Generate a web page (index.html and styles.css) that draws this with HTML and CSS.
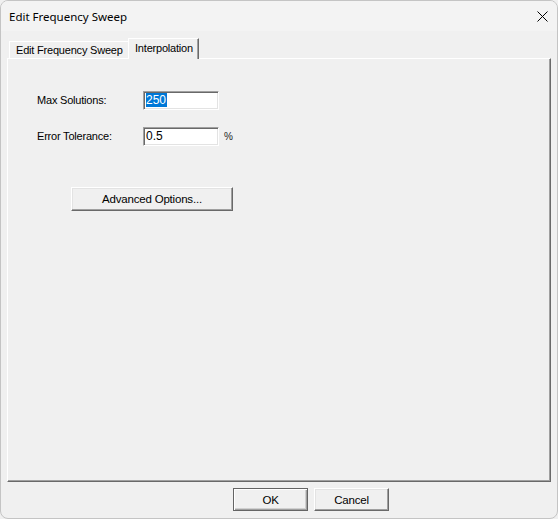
FILE: index.html
```html
<!DOCTYPE html>
<html>
<head>
<meta charset="utf-8">
<link rel="stylesheet" href="styles.css">
</head>
<body>
<div class="window">
  <div class="titlebar">
    <span class="title">Edit Frequency Sweep</span>
    <svg class="close" width="11" height="11" viewBox="0 0 11 11"><path d="M0.5 0.5 L10.5 10.5 M10.5 0.5 L0.5 10.5" stroke="#000" stroke-width="1"/></svg>
  </div>
  <div class="body">
    <div class="tabs">
      <div class="tab">Edit Frequency Sweep</div>
      <div class="tab active">Interpolation</div>
    </div>
    <div class="panel">
      <div class="form">
        <label class="label">Max Solutions:</label>
        <div class="field"><span class="sel">250</span></div>
        <span></span>
        <label class="label">Error Tolerance:</label>
        <div class="field">0.5</div>
        <span class="unit">%</span>
      </div>
      <button class="btn adv">Advanced Options...</button>
    </div>
    <div class="footer">
      <button class="btn default">OK</button>
      <button class="btn">Cancel</button>
    </div>
  </div>
</div>
</body>
</html>
```
FILE: styles.css
```css
html, body { margin: 0; padding: 0; background: #f0f0f0; }
.window {
  width: 558px; height: 519px; box-sizing: border-box;
  border: 1px solid #c4c4c4; border-radius: 8px;
  background: #f0f0f0; overflow: hidden;
  display: flex; flex-direction: column;
  font-family: "Liberation Sans", Arial, sans-serif; font-size: 11px; color: #000;
  letter-spacing: -0.2px;
}
.titlebar {
  height: 30px; flex: none; background: #f3f3f3;
  display: flex; align-items: center; justify-content: space-between;
  padding: 0 9px 0 8px;
}
.title { font-family: "Noto Sans", "Open Sans", sans-serif; font-size: 11.5px; color: #000; letter-spacing: 0; }
.close { display: block; margin-top: 1px; }
.body { padding: 7px 0 0 6px; display: flex; flex-direction: column; }
.tabs { display: flex; align-items: flex-end; margin-left: 2px; height: 20px; position: relative; z-index: 1; }
.tab {
  box-sizing: border-box; height: 17px; padding: 1px 0 0 6px; white-space: nowrap;
  border-top: 1px solid #fff; border-left: 1px solid #fff;
  display: flex; align-items: center; line-height: 13px;
}
.tab:first-child { width: 119px; }
.tab.active {
  height: 21px; width: 71px; margin-bottom: -1px; background: #f0f0f0;
  border-right: 1px solid #696969; box-shadow: inset -1px 0 0 #a0a0a0;
  padding: 0 0 2px 6px;
}
.panel {
  box-sizing: border-box; width: 544px; height: 424px;
  border-top: 1px solid #fff; border-left: 1px solid #fff;
  border-right: 1px solid #696969; border-bottom: 1px solid #696969;
  box-shadow: inset -1px -1px 0 #a0a0a0;
  padding: 32px 0 0 29px;
  display: flex; flex-direction: column; align-items: flex-start;
}
.form {
  display: grid; grid-template-columns: 106px 76px auto; row-gap: 17px; align-items: center;
}
.label { line-height: 19px; }
.field {
  box-sizing: border-box; height: 19px; width: 76px; background: #fff;
  border-top: 1px solid #a0a0a0; border-left: 1px solid #a0a0a0;
  border-right: 1px solid #fff; border-bottom: 1px solid #fff;
  box-shadow: inset 1px 1px 0 #696969, inset -1px -1px 0 #e3e3e3;
  padding: 1px 2px 0 2px; line-height: 15px; font-size: 12px; letter-spacing: 0;
}
.sel { background: #0078d7; color: #fff; display: inline-block; line-height: 14px; padding: 0 1px 0 0; }
.unit { padding-left: 5px; font-size: 10px; color: #222; }
.btn {
  box-sizing: border-box; height: 23px; width: 75px; margin: 0; padding: 0;
  font-family: "Liberation Sans", Arial, sans-serif; font-size: 11.5px; color: #000;
  letter-spacing: -0.2px;
  background: #f0f0f0;
  border-top: 1px solid #fff; border-left: 1px solid #fff;
  border-right: 1px solid #696969; border-bottom: 1px solid #696969;
  box-shadow: inset -1px -1px 0 #a0a0a0, inset 1px 1px 0 #e3e3e3;
}
.btn.adv { width: 162px; height: 24px; margin-top: 41px; margin-left: 34px; }
.footer { display: flex; gap: 6px; padding-left: 226px; margin-top: 6px; }
.btn.default {
  border: 1px solid #646464;
  box-shadow: inset 1px 1px 0 #fff, inset -1px -1px 0 #a0a0a0, inset -2px -2px 0 #d0d0d0;
}
```
